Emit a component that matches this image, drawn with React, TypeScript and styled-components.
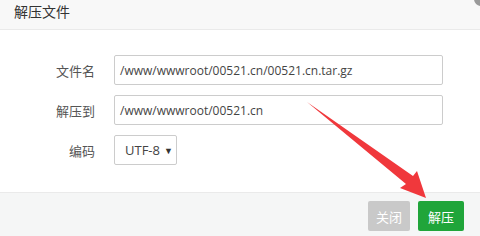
import React from "react";
import styled, { createGlobalStyle } from "styled-components";

const Global = createGlobalStyle`
  html, body { margin: 0; padding: 0; background: #fff; }
  body { width: 480px; height: 236px; overflow: hidden; font-family: "Open Sans", "Noto Sans CJK SC", sans-serif; }
`;

const Dialog = styled.div`
  position: relative;
  width: 480px;
  height: 236px;
  display: flex;
  flex-direction: column;
  background: #fff;
  overflow: hidden;
`;

const Header = styled.div`
  height: 30px;
  box-sizing: border-box;
  background: #f8f8f8;
  border-bottom: 1px solid #eaeaea;
  padding-left: 14px;
  display: flex;
  align-items: flex-start;
  font-family: "Noto Sans CJK SC", sans-serif;
  font-size: 14px;
  line-height: 22px;
  color: #333;
`;

const Body = styled.div`
  flex: 1;
  display: flex;
  flex-direction: column;
  gap: 10px;
  padding-top: 25px;
`;

const Row = styled.div`
  display: flex;
  align-items: center;
  height: 30px;
`;

const Label = styled.div`
  width: 114px;
  flex: none;
  text-align: right;
  padding-right: 19px;
  box-sizing: border-box;
  font-family: "Noto Sans CJK SC", sans-serif;
  font-size: 13px;
  color: #555;
`;

const Input = styled.div<{ $w: number }>`
  width: ${(p) => p.$w}px;
  flex: none;
  height: 30px;
  box-sizing: border-box;
  border: 1px solid #ccc;
  border-radius: 2px;
  padding-left: 5px;
  display: flex;
  align-items: center;
  font-family: "Open Sans", sans-serif;
  font-size: 12px;
  color: #444;
`;

const Select = styled(Input)`
  padding-left: 10px;
  gap: 4px;
  font-size: 13px;
`;

const Caret = styled.span`
  font-size: 9px;
  color: #333;
`;

const Footer = styled.div`
  height: 44px;
  box-sizing: border-box;
  background: #f5f6f6;
  border-top: 1px solid #eaeaea;
  display: flex;
  justify-content: flex-end;
  align-items: flex-start;
  padding-top: 8px;
  padding-right: 16px;
  gap: 8px;
`;

const Button = styled.div<{ $bg: string; $w: number }>`
  width: ${(p) => p.$w}px;
  height: 30px;
  border-radius: 2px;
  background: ${(p) => p.$bg};
  color: #fff;
  font-family: "Noto Sans CJK SC", sans-serif;
  font-size: 13px;
  display: flex;
  align-items: center;
  justify-content: center;
`;

const Arrow = styled.svg`
  position: absolute;
  left: 0;
  top: 0;
  pointer-events: none;
`;

const CornerMark = styled.div`
  position: absolute;
  right: -8px;
  top: -8px;
  width: 14px;
  height: 14px;
  border-radius: 50%;
  background: #9a9a9a;
`;

export default function App() {
  return (
    <>
      <Global />
      <Dialog>
        <Header>解压文件</Header>
        <Body>
          <Row>
            <Label>文件名</Label>
            <Input $w={329}>/www/wwwroot/00521.cn/00521.cn.tar.gz</Input>
          </Row>
          <Row>
            <Label>解压到</Label>
            <Input $w={329}>/www/wwwroot/00521.cn</Input>
          </Row>
          <Row>
            <Label>编码</Label>
            <Select $w={63}>
              UTF-8 <Caret>▼</Caret>
            </Select>
          </Row>
        </Body>
        <Footer>
          <Button $bg="#c9c9c9" $w={42}>关闭</Button>
          <Button $bg="#20a53a" $w={46}>解压</Button>
        </Footer>
        <CornerMark />
        <Arrow width="480" height="236" viewBox="0 0 480 236">
          <polygon
            points="307,102 413,176 417,171 426,198 400,188 406,184"
            fill="#f0383c"
          />
        </Arrow>
      </Dialog>
    </>
  );
}
